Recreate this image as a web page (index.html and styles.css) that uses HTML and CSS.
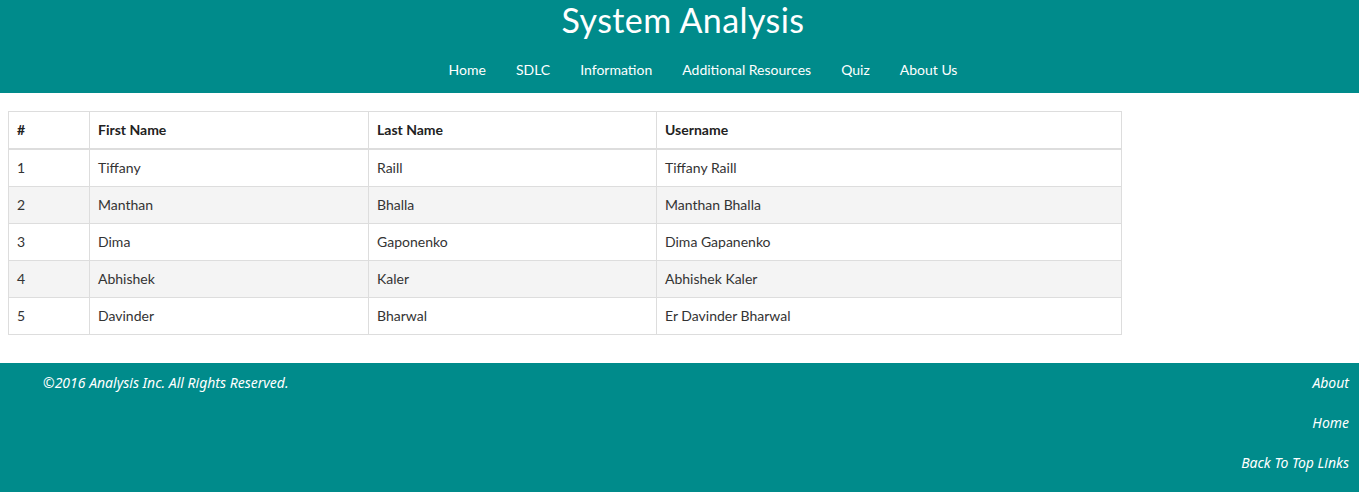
FILE: index.html
```html
<!DOCTYPE html>
<html>
<head>
<meta charset="utf-8">
<link rel="stylesheet" href="styles.css">
</head>
<body>
<header class="site-header">
  <h1 class="site-title">System Analysis</h1>
  <nav>
    <ul class="nav">
      <li><a href="#">Home</a></li>
      <li><a href="#">SDLC</a></li>
      <li><a href="#">Information</a></li>
      <li><a href="#">Additional Resources</a></li>
      <li><a href="#">Quiz</a></li>
      <li><a href="#">About Us</a></li>
    </ul>
  </nav>
</header>
<main class="content">
  <table class="table">
    <thead>
      <tr><th class="c1">#</th><th class="c2">First Name</th><th class="c3">Last Name</th><th>Username</th></tr>
    </thead>
    <tbody>
      <tr><td>1</td><td>Tiffany</td><td>Raill</td><td>Tiffany Raill</td></tr>
      <tr><td>2</td><td>Manthan</td><td>Bhalla</td><td>Manthan Bhalla</td></tr>
      <tr><td>3</td><td>Dima</td><td>Gaponenko</td><td>Dima Gapanenko</td></tr>
      <tr><td>4</td><td>Abhishek</td><td>Kaler</td><td>Abhishek Kaler</td></tr>
      <tr><td>5</td><td>Davinder</td><td>Bharwal</td><td>Er Davinder Bharwal</td></tr>
    </tbody>
  </table>
</main>
<footer class="site-footer">
  <p class="copy">©2016 Analysis Inc. All Rights Reserved.</p>
  <ul class="footer-links">
    <li><a href="#">About</a></li>
    <li><a href="#">Home</a></li>
    <li><a href="#">Back To Top Links</a></li>
  </ul>
</footer>
</body>
</html>
```
FILE: styles.css
```css
* { box-sizing: border-box; }
html, body { margin: 0; padding: 0; }
body {
  font-family: Lato, "Noto Sans", sans-serif;
  font-size: 14px;
  line-height: 1.42857;
  color: #333;
  background: #fff;
}
a { text-decoration: none; color: inherit; }
.site-header {
  background: #008b8b;
  color: #fff;
  height: 93px;
  text-align: center;
  overflow: hidden;
}
.site-title {
  margin: 0;
  padding-top: 2px;
  font-weight: normal;
  font-size: 34px;
  line-height: 36px;
  letter-spacing: 0.4px;
  padding-left: 7px;
}
.nav {
  list-style: none;
  margin: 22px 0 0;
  padding: 0 0 0 47px;
  display: flex;
  justify-content: center;
}
.nav li a {
  display: block;
  padding: 0 15px;
  line-height: 20px;
  font-size: 14px;
  color: #fff;
}
.content {
  padding: 18px 8px 0;
}
.table {
  width: 1114px;
  border-collapse: collapse;
  margin-bottom: 28px;
}
.table th, .table td {
  border: 1px solid #ddd;
  padding: 8px;
  text-align: left;
  vertical-align: top;
  height: 37px;
}
.table th {
  font-weight: bold;
  border-bottom: 2px solid #ddd;
  color: #222;
}
.table .c1 { width: 81px; }
.table .c2 { width: 279px; }
.table .c3 { width: 288px; }
.table tbody tr:nth-child(even) { background: #f4f4f4; }
.site-footer {
  background: #008b8b;
  color: #fff;
  font-family: "Noto Sans", sans-serif;
  font-style: italic;
  font-size: 14px;
  display: flex;
  justify-content: space-between;
  padding: 10px 10px 10px 43px;
  min-height: 129px;
}
.copy { margin: 0; line-height: 20px; }
.footer-links {
  list-style: none;
  margin: 0;
  padding: 0;
  text-align: right;
}
.footer-links li { line-height: 20px; margin-bottom: 20px; }
.footer-links li:last-child { margin-bottom: 0; }
```
